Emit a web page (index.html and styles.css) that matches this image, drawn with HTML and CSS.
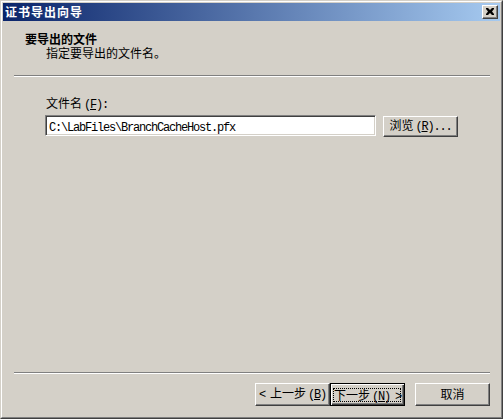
FILE: index.html
```html
<!DOCTYPE html>
<html lang="zh-CN">
<head>
<meta charset="utf-8">
<title>证书导出向导</title>
<link rel="stylesheet" href="styles.css">
</head>
<body>
<div class="window">
  <div class="frame">
    <div class="titlebar">
      <span class="title">证书导出向导</span>
      <div class="close">
        <svg width="8" height="7" viewBox="0 0 8 7"><path d="M0 0h2l2 2 2-2h2v1l-2 2.5 2 2.5v1h-2l-2-2-2 2h-2v-1l2-2.5-2-2.5z" fill="#000"/></svg>
      </div>
    </div>
    <div class="header">
      <div class="h-title">要导出的文件</div>
      <div class="h-sub">指定要导出的文件名。</div>
    </div>
    <div class="sep top"></div>
    <div class="body">
      <div class="lbl">文件名<span class="a paren">(<u>F</u>):</span></div>
      <div class="row">
        <div class="input"><span class="mono">C:\LabFiles\BranchCacheHost.pfx</span></div>
        <div class="btn browse"><span class="cap">浏览<span class="a paren">(<u>R</u>)...</span></span></div>
      </div>
    </div>
    <div class="sep bottom"></div>
    <div class="footer">
      <div class="btn"><span class="cap"><span class="a lt">&lt;</span>上一步<span class="a paren">(<u>B</u>)</span></span></div>
      <div class="btn default"><span class="focus">下一步<span class="a paren">(<u>N</u>)</span><span class="a gt">&gt;</span></span></div>
      <div class="btn cancel"><span class="cap">取消</span></div>
    </div>
  </div>
</div>
</body>
</html>
```

FILE: styles.css
```css
html, body {
  margin: 0;
  padding: 0;
  background: #D4D0C8;
}
body {
  font-family: "Noto Sans CJK SC", "Noto Sans", sans-serif;
  font-size: 12px;
  line-height: 12px;
  color: #000;
}
.window {
  width: 503px;
  height: 419px;
  box-sizing: border-box;
  border: 1px solid;
  border-color: #D4D0C8 #404040 #404040 #D4D0C8;
}
.frame {
  height: 100%;
  box-sizing: border-box;
  border: 1px solid;
  border-color: #FFFFFF #808080 #808080 #FFFFFF;
  padding: 1px;
  display: flex;
  flex-direction: column;
}
.titlebar {
  height: 18px;
  flex: none;
  background: linear-gradient(to right, #0A246A, #A6CAF0);
  display: flex;
  align-items: center;
  justify-content: space-between;
  padding: 0 2px;
}
.title {
  color: #fff;
  font-weight: bold;
  font-size: 12px;
  line-height: 12px;
  letter-spacing: 1px;
}
.close {
  width: 16px;
  height: 14px;
  box-sizing: border-box;
  background: #D4D0C8;
  border: 1px solid;
  border-color: #FFFFFF #404040 #404040 #FFFFFF;
  box-shadow: inset -1px -1px #808080;
  display: flex;
  align-items: center;
  justify-content: center;
}
.close svg { display: block; margin: 0 1px 1px 0; }
.header {
  padding: 11px 0 0 22px;
  line-height: 14px;
}
.h-title {
  font-weight: bold;
}
.h-sub {
  margin: 0 0 0 21px;
}
.sep {
  height: 2px;
  box-sizing: border-box;
  border-top: 1px solid #808080;
  border-bottom: 1px solid #FFFFFF;
  margin: 0 10px 0 11px;
}
.sep.top { margin-top: 15px; }
.sep.bottom { margin-top: auto; }
.a {
  font-family: "Liberation Mono", monospace;
  letter-spacing: -1.2px;
}
.paren { margin-left: 2px; }
.lt { margin-right: 5px; }
.gt { margin-left: 5px; }
.body {
  padding: 20px 0 0 43px;
}
.row {
  display: flex;
  margin: 4px 0 0 -1px;
}
.input {
  width: 331px;
  height: 21px;
  box-sizing: border-box;
  background: #fff;
  border: 1px solid;
  border-color: #808080 #FFFFFF #FFFFFF #808080;
  box-shadow: inset 1px 1px #404040, inset -1px -1px #D4D0C8;
  padding: 4px 0 0 3px;
}
.mono {
  font-family: "Liberation Mono", monospace;
  letter-spacing: -1.2px;
}
.btn {
  width: 75px;
  height: 23px;
  box-sizing: border-box;
  background: #D4D0C8;
  border: 1px solid;
  border-color: #FFFFFF #404040 #404040 #FFFFFF;
  box-shadow: inset -1px -1px #808080;
  display: flex;
  align-items: center;
  justify-content: center;
  padding-bottom: 1px;
}
.cap {
  display: block;
  white-space: nowrap;
}
.browse {
  height: 21px;
  margin: 1px 0 0 7px;
}
.footer {
  display: flex;
  justify-content: flex-end;
  padding: 9px 10px 10px 0;
}
.btn.default {
  border: 1px solid #000;
  box-shadow: inset 1px 1px #FFFFFF, inset -1px -1px #404040, inset -2px -2px #808080;
  padding: 0;
}
.focus {
  display: block;
  white-space: nowrap;
  width: 68px;
  height: 14px;
  box-sizing: border-box;
  border: 1px dotted #000;
  text-align: center;
  line-height: 12px;
  margin-right: 1px;
}
.btn.cancel {
  margin-left: 10px;
}
u { text-decoration: underline; }
```
